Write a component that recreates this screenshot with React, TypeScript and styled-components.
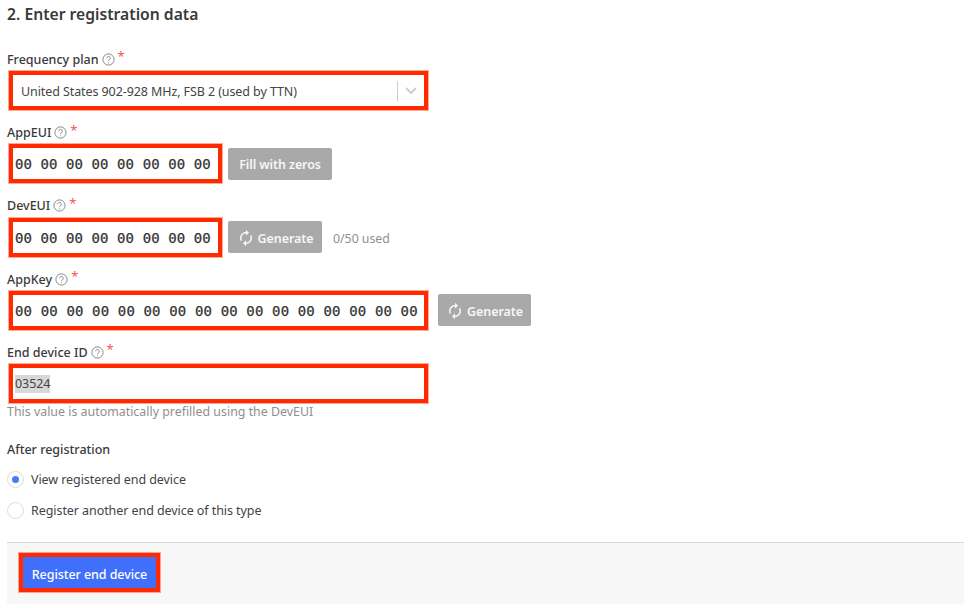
import React from "react";
import styled, { createGlobalStyle } from "styled-components";
import { MdAutorenew } from "react-icons/md";

const Global = createGlobalStyle`
  html, body { margin: 0; padding: 0; background: #fff; overflow: hidden; }
  body { font-family: "Noto Sans", "Liberation Sans", sans-serif; color: #3c3c3c; }
  * { box-sizing: border-box; }
`;

const Page = styled.main`
  width: 970px;
  height: 609px;
  padding: 2px 6px 0 7px;
  display: flex;
  flex-direction: column;
`;
const Heading = styled.h2`
  margin: 0 0 24.5px;
  height: 24px;
  line-height: 24px;
  font-size: 15.7px;
  font-weight: 600;
  color: #3a3a3a;
`;
const Field = styled.div<{ $last?: boolean }>`
  display: flex;
  flex-direction: column;
  margin-bottom: ${(p) => (p.$last ? 0 : 13.8)}px;
`;
const Label = styled.label`
  display: flex;
  align-items: center;
  height: 20.5px;
  padding-bottom: 3px;
  font-size: 12.5px;
  font-weight: 500;
  color: #3a3a3a;
`;
const HelpIcon = styled.svg`
  width: 13px;
  height: 13px;
  margin-left: 3px;
  flex: none;
`;
const Required = styled.span`
  color: #f5544f;
  font-size: 13px;
  font-weight: 400;
  line-height: 1;
  margin: -5px 0 0 3px;
`;
const Row = styled.div`
  display: flex;
  align-items: center;
  margin-left: 2px;
`;
const RedBox = styled.div<{ $w: number }>`
  width: ${(p) => p.$w}px;
  height: 39px;
  border: 4px solid #ff2a00;
  box-shadow: 0 0 0 1px rgba(255, 42, 0, 0.4);
  background: #fff;
  display: flex;
  align-items: center;
  flex: none;
`;
const SelectText = styled.span`
  flex: 1;
  font-size: 12.5px;
  padding: 2px 0 0 8px;
  letter-spacing: -0.09px;
  color: #444;
`;
const Separator = styled.span`
  width: 1px;
  height: 20px;
  background: #ccc;
`;
const Chevron = styled.svg`
  width: 26px;
  height: 16px;
  flex: none;
`;
const HexValue = styled.span<{ $spacing: number }>`
  font-family: "DejaVu Sans Mono", "Liberation Mono", monospace;
  font-size: 14px;
  letter-spacing: ${(p) => p.$spacing}px;
  color: #333;
  padding: 1px 0 0 2px;
  white-space: pre;
  -webkit-text-stroke: 0.25px #333;
`;
const PlainValue = styled.span`
  font-size: 12.5px;
  letter-spacing: -0.07px;
  margin-left: 2px;
  background: #d8d8d8;
  color: #444;
  line-height: 18px;
`;
const GhostButton = styled.button<{ $w: number; $gap: number }>`
  width: ${(p) => p.$w}px;
  height: 32px;
  margin-left: ${(p) => p.$gap}px;
  border: 0;
  border-radius: 2px;
  background: #a9a9a9;
  color: #f6f6f6;
  font-family: inherit;
  font-size: 12.5px;
  font-weight: 600;
  letter-spacing: -0.1px;
  display: flex;
  align-items: center;
  justify-content: center;
  gap: 3px;
  padding: 2px 0 0;
  flex: none;
`;
const Used = styled.span`
  margin-left: 11px;
  padding-top: 2px;
  font-size: 12.3px;
  color: #8f8f8f;
`;
const Hint = styled.div`
  height: 16px;
  line-height: 16px;
  margin-top: 1px;
  font-size: 12.4px;
  color: #8f8f8f;
`;
const SubLabel = styled.div`
  height: 20px;
  line-height: 20px;
  margin-top: 20px;
  font-size: 12.5px;
  font-weight: 500;
  color: #3a3a3a;
`;
const RadioGroup = styled.div`
  display: flex;
  flex-direction: column;
  margin-top: 3.5px;
  margin-bottom: 16.5px;
`;
const RadioRow = styled.label`
  height: 31px;
  display: flex;
  align-items: center;
  gap: 7px;
  font-size: 12.5px;
  letter-spacing: -0.07px;
  color: #444;
`;
const RadioDot = styled.span<{ $on?: boolean }>`
  width: 17px;
  height: 17px;
  border-radius: 50%;
  border: 1px solid #dcdcdc;
  background: #fff;
  display: flex;
  align-items: center;
  justify-content: center;
  &::after {
    content: "";
    width: 7px;
    height: 7px;
    border-radius: 50%;
    background: ${(p) => (p.$on ? "#4a79f5" : "transparent")};
  }
`;
const Footer = styled.footer`
  height: 62px;
  border-top: 1px solid #d8d8d8;
  background: #f7f7f7;
  padding: 10px 0 0 12px;
`;
const Submit = styled.button`
  width: 141px;
  height: 39px;
  border: 4px solid #ff2a00;
  box-shadow: 0 0 0 1px rgba(255, 42, 0, 0.4);
  background: #4070fb;
  color: #fff;
  font-family: inherit;
  font-size: 12.5px;
  font-weight: 500;
  letter-spacing: -0.07px;
  padding: 4px 0 0;
`;

const Help = () => (
  <HelpIcon viewBox="0 0 13 13" fill="none" stroke="#7c7c7c" strokeWidth="0.9">
    <circle cx="6.5" cy="6.5" r="5.6" />
    <path d="M4.8 5.2a1.75 1.75 0 1 1 2.7 1.45c-.65.42-1 .75-1 1.45" />
    <circle cx="6.5" cy="9.7" r="0.55" fill="#7c7c7c" stroke="none" />
  </HelpIcon>
);

const FieldLabel = ({ children }: { children: React.ReactNode }) => (
  <Label>
    {children}
    <Help />
    <Required>*</Required>
  </Label>
);

const hex = (n: number) => Array(n).fill("00").join(" ");

export default function App() {
  return (
    <Page>
      <Global />
      <Heading>2. Enter registration data</Heading>

      <Field>
        <FieldLabel>Frequency plan</FieldLabel>
        <Row>
          <RedBox $w={419}>
            <SelectText>United States 902-928 MHz, FSB 2 (used by TTN)</SelectText>
            <Separator />
            <Chevron viewBox="0 0 26 16" fill="none" stroke="#cfcfcf" strokeWidth="2">
              <path d="M8 5l5 5 5-5" />
            </Chevron>
          </RedBox>
        </Row>
      </Field>

      <Field>
        <FieldLabel>AppEUI</FieldLabel>
        <Row>
          <RedBox $w={213}>
            <HexValue $spacing={0.08}>{hex(8)}</HexValue>
          </RedBox>
          <GhostButton $w={104} $gap={6}>Fill with zeros</GhostButton>
        </Row>
      </Field>

      <Field>
        <FieldLabel>DevEUI</FieldLabel>
        <Row>
          <RedBox $w={213}>
            <HexValue $spacing={0.08}>{hex(8)}</HexValue>
          </RedBox>
          <GhostButton $w={94} $gap={6}>
            <MdAutorenew size={18} />
            Generate
          </GhostButton>
          <Used>0/50 used</Used>
        </Row>
      </Field>

      <Field>
        <FieldLabel>AppKey</FieldLabel>
        <Row>
          <RedBox $w={419}>
            <HexValue $spacing={0.14}>{hex(16)}</HexValue>
          </RedBox>
          <GhostButton $w={93} $gap={10}>
            <MdAutorenew size={18} />
            Generate
          </GhostButton>
        </Row>
      </Field>

      <Field $last>
        <FieldLabel>End device ID</FieldLabel>
        <Row>
          <RedBox $w={419}>
            <PlainValue>03524</PlainValue>
          </RedBox>
        </Row>
      </Field>
      <Hint>This value is automatically prefilled using the DevEUI</Hint>

      <SubLabel>After registration</SubLabel>
      <RadioGroup>
        <RadioRow>
          <RadioDot $on />
          View registered end device
        </RadioRow>
        <RadioRow>
          <RadioDot />
          Register another end device of this type
        </RadioRow>
      </RadioGroup>

      <Footer>
        <Submit>Register end device</Submit>
      </Footer>
    </Page>
  );
}
